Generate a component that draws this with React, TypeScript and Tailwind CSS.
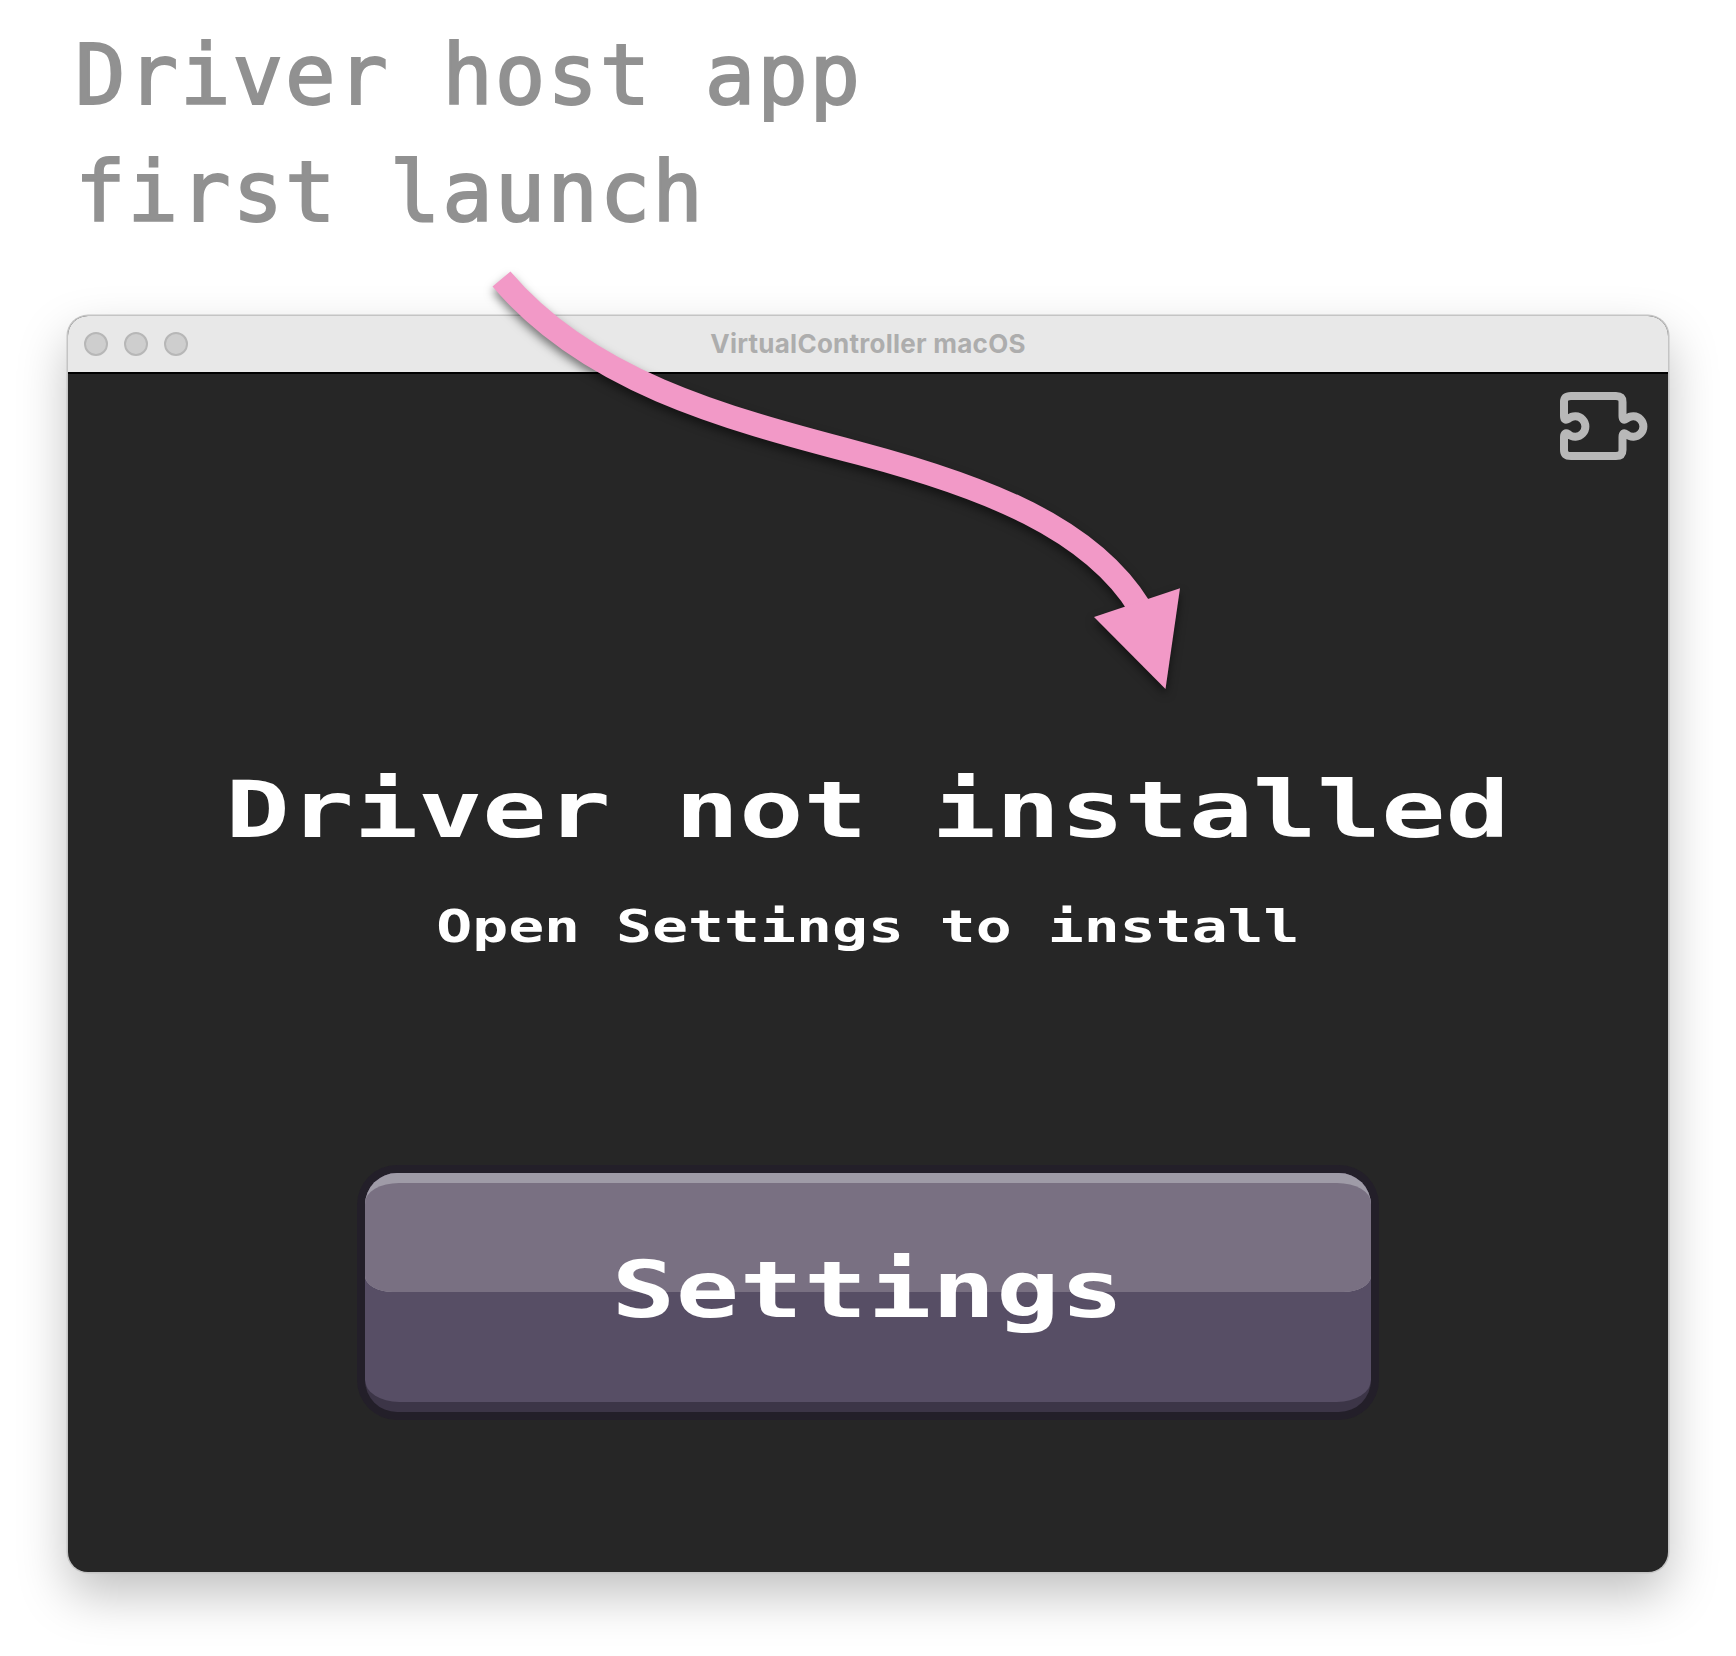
function PuzzleIcon() {
  return (
    <svg className="h-[72px] w-[92px]" viewBox="0 0 92 72" fill="none" stroke="#b8b8b8" strokeWidth="8" strokeLinejoin="round">
      <path d="M12 6 H57 Q63.5 6 63.5 12 V26 Q63.5 31.5 67.5 28.8 A10.2 10.2 0 1 1 67.5 44.2 Q63.5 41.5 63.5 47 V60 Q63.5 66 57 66 H12 Q5 66 5 60 V47 Q5 41.5 9.5 44.2 A10.2 10.2 0 1 0 9.5 28.8 Q5 31.5 5 26 V12 Q5 6 12 6 Z" />
    </svg>
  );
}

function TitleBar() {
  return (
    <header className="relative flex h-[58px] shrink-0 items-center justify-center border-b-2 border-black bg-[#e8e8e8]">
      <div className="absolute left-4 flex gap-4">
        <span className="size-6 rounded-full border-2 border-[#b7b7b7] bg-[#cecece]" />
        <span className="size-6 rounded-full border-2 border-[#b7b7b7] bg-[#cecece]" />
        <span className="size-6 rounded-full border-2 border-[#b7b7b7] bg-[#cecece]" />
      </div>
      <span className="font-['Inter',sans-serif] text-[26px] leading-none font-bold tracking-[0.25px] text-[#adadad]">VirtualController macOS</span>
    </header>
  );
}

function SettingsButton() {
  return (
    <button className="mt-[212px] h-[255px] w-[1022px] rounded-[40px] bg-[#231f29] p-2">
      <span className="block h-full overflow-hidden rounded-[32px] bg-[#3c3547]">
        <span className="block h-[229px] overflow-hidden rounded-b-[34px_22px] bg-[#574e65]">
          <span className="block h-[119px] overflow-hidden rounded-b-[28px_16px] bg-[#9f9ba7] pt-[10px]">
            <span className="block h-full rounded-t-[34px_20px] bg-[#797082]" />
          </span>
          <span className="relative -top-[41px] block scale-x-[1.35] text-[78px] leading-none font-bold tracking-[0.5px] text-white">Settings</span>
        </span>
      </span>
    </button>
  );
}

function Arrow() {
  return (
    <svg className="pointer-events-none absolute inset-0 h-[1656px] w-[1736px] drop-shadow-[0_5px_5px_rgba(0,0,0,0.5)]" viewBox="0 0 1736 1656">
      <path d="M501.5 279 C587 380 720 417 860 453.5 C986 487 1091 528 1140 608" fill="none" stroke="#f299c7" strokeWidth="23.5" />
      <path d="M1094 617 L1180 588.3 L1165.5 689 Z" fill="#f299c7" />
    </svg>
  );
}

export default function App() {
  return (
    <main className="relative flex h-[1656px] w-[1736px] flex-col items-center overflow-hidden bg-white font-['DejaVu_Sans_Mono',monospace]">
      <h1 className="h-[316px] shrink-0 self-stretch pt-[17px] pl-[75px] text-[84px] leading-[117px] tracking-[1.9px] text-[#919191] [-webkit-text-stroke:2px_#919191]">
        Driver host app
        <br />
        first launch
      </h1>
      <section className="flex h-[1256px] w-[1600px] shrink-0 flex-col overflow-hidden rounded-[20px] bg-[#262626] shadow-[0_0_0_1.5px_#c4c4c4,0_22px_50px_rgba(0,0,0,0.25)]">
        <TitleBar />
        <div className="flex flex-1 flex-col items-center text-white">
          <div className="mt-[16px] mr-[17px] self-end">
            <PuzzleIcon />
          </div>
          <h2 className="mt-[308px] scale-x-[1.35] text-[79px] leading-[80px] font-bold whitespace-nowrap">Driver not installed</h2>
          <p className="mt-[51px] scale-x-[1.358] text-[44px] leading-[52px] font-bold whitespace-nowrap">Open Settings to install</p>
          <SettingsButton />
        </div>
      </section>
      <Arrow />
    </main>
  );
}
